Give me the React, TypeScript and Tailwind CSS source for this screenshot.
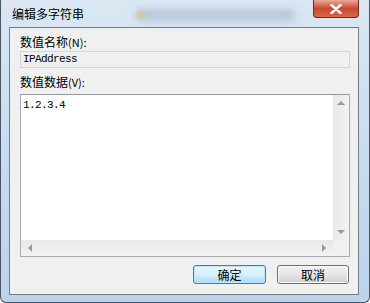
import React from 'react';

const cjk = { fontFamily: '"Noto Sans CJK SC", "Noto Sans", sans-serif' };
const mono = { fontFamily: '"Liberation Mono", "DejaVu Sans Mono", monospace' };

const Arrow: React.FC<{ dir: 'up' | 'down' | 'left' | 'right' }> = ({ dir }) => {
  const pts = {
    up: '0,4 4,0 8,4',
    down: '0,0 8,0 4,4',
    left: '4,0 4,8 0,4',
    right: '0,0 0,8 4,4',
  }[dir];
  const w = dir === 'up' || dir === 'down' ? 8 : 4;
  const h = dir === 'up' || dir === 'down' ? 4 : 8;
  return (
    <svg width={w} height={h} viewBox={`0 0 ${w} ${h}`}>
      <polygon points={pts} fill="#9a9a9a" />
    </svg>
  );
};

export default function App() {
  return (
    <div className="w-[370px] h-[303px] overflow-hidden bg-white">
      <div className="relative w-full h-full flex flex-col rounded-b-[6px] border-l border-r border-b border-[#4b5563] bg-gradient-to-b from-[#dbe7f3] via-[#c9dcef] to-[#bcd3ea]">
        {/* title bar */}
        <div className="relative h-[27px] flex items-center pl-[11px]">
          <div className="absolute left-[135px] top-[9px] w-[160px] h-[12px] rounded-full bg-[#9fb2c8] opacity-60 blur-[4px]" />
          <div className="absolute left-[136px] top-[11px] w-[8px] h-[8px] rounded-full bg-[#d9c46a] opacity-70 blur-[2px]" />
          <span className="relative text-[12px] leading-none text-black" style={cjk}>
            编辑多字符串
          </span>
          <div className="absolute right-[10px] top-0 w-[46px] h-[18px] rounded-b-[4px] border border-t-0 border-[#6b2a20] bg-gradient-to-b from-[#e9a89a] via-[#c9462f] to-[#d7684b] flex items-center justify-center">
            <svg width="12" height="10" viewBox="0 0 12 10">
              <path d="M1.5 1 L10.5 9 M10.5 1 L1.5 9" stroke="#ffffff" strokeWidth="2.6" strokeLinecap="round" />
            </svg>
          </div>
        </div>

        {/* client area */}
        <div className="flex-1 ml-[8px] mr-[10px] mb-[7px] border border-[#6d7f93] bg-[#f0f0f0] flex flex-col pl-[10px] pr-[8px] pt-[6px]" style={cjk}>
          <div className="h-[16px] flex items-center text-[12px] text-black leading-none">
            数值名称<span className="text-[11px]">(N):</span>
          </div>
          <div className="mt-[1px] h-[17px] border border-[#d5d5d5] bg-[#f0f0f0] flex items-center pl-[2px]">
            <span className="text-[11px] tracking-[-0.6px] text-black leading-none" style={mono}>
              IPAddress
            </span>
          </div>
          <div className="mt-[6px] h-[16px] flex items-center text-[12px] text-black leading-none">
            数值数据<span className="text-[11px]">(V):</span>
          </div>
          <div className="mt-[4px] h-[163px] border border-[#abadb3] border-t-[#8d9aa7] bg-white grid grid-cols-[1fr_16px] grid-rows-[1fr_16px]">
            <div className="pl-[2px] pt-[4px] text-[11px] tracking-[-0.6px] text-black leading-[12px]" style={mono}>
              1.2.3.4
            </div>
            <div className="bg-gradient-to-r from-[#e8e8e8] to-[#f3f3f3] flex flex-col items-center justify-between py-[6px]">
              <Arrow dir="up" />
              <Arrow dir="down" />
            </div>
            <div className="bg-gradient-to-b from-[#e8e8e8] to-[#f3f3f3] flex items-center justify-between px-[7px]">
              <Arrow dir="left" />
              <Arrow dir="right" />
            </div>
            <div className="bg-[#f0f0f0]" />
          </div>
          <div className="mt-[8px] flex justify-end gap-[11px] pr-[1px]">
            <button className="w-[73px] h-[19px] rounded-[3px] border border-[#3c7fb1] bg-gradient-to-b from-[#eaf6fd] via-[#d9f0fc] to-[#a7d9f5] shadow-[inset_0_0_0_1px_#c0e5f8] text-[12px] leading-none text-black">
              确定
            </button>
            <button className="w-[72px] h-[19px] rounded-[3px] border border-[#707070] bg-gradient-to-b from-[#f2f2f2] via-[#e6e6e6] to-[#cfcfcf] shadow-[inset_0_0_0_1px_#fbfbfb] text-[12px] leading-none text-black">
              取消
            </button>
          </div>
        </div>
      </div>
    </div>
  );
}
